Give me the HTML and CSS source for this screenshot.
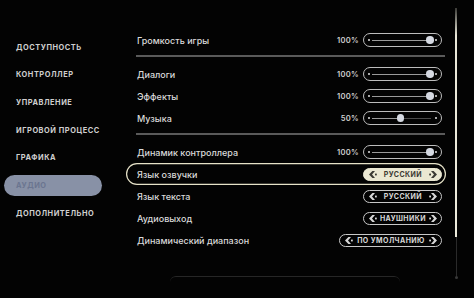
FILE: index.html
```html
<!DOCTYPE html>
<html lang="ru">
<head>
    <meta charset="UTF-8">
    <meta name="viewport" content="width=device-width, initial-scale=1.0">
    <title>Аудио</title>
    <link rel="stylesheet" href="styles.css">
</head>
<body>

<div class="screen">
    <nav class="sidebar">
        <div class="nav-item">Доступность</div>
        <div class="nav-item">Контроллер</div>
        <div class="nav-item">Управление</div>
        <div class="nav-item">Игровой процесс</div>
        <div class="nav-item">Графика</div>
        <div class="nav-item active">Аудио</div>
        <div class="nav-item">Дополнительно</div>
    </nav>

    <div class="settings">
        <div class="row">
            <span class="label">Громкость игры</span>
            <div class="control">
                <span class="value">100%</span>
                <div class="slider"><span class="dot"></span><div class="track"><span class="fill" style="width: 100%"></span><span class="knob" style="left: 100%"></span></div><span class="dot end"></span></div>
            </div>
        </div>
        <div class="divider"></div>
        <div class="row">
            <span class="label">Диалоги</span>
            <div class="control">
                <span class="value">100%</span>
                <div class="slider"><span class="dot"></span><div class="track"><span class="fill" style="width: 100%"></span><span class="knob" style="left: 100%"></span></div><span class="dot end"></span></div>
            </div>
        </div>
        <div class="row">
            <span class="label">Эффекты</span>
            <div class="control">
                <span class="value">100%</span>
                <div class="slider"><span class="dot"></span><div class="track"><span class="fill" style="width: 100%"></span><span class="knob" style="left: 100%"></span></div><span class="dot end"></span></div>
            </div>
        </div>
        <div class="row">
            <span class="label">Музыка</span>
            <div class="control">
                <span class="value">50%</span>
                <div class="slider"><span class="dot"></span><div class="track"><span class="fill" style="width: 50%"></span><span class="knob" style="left: 50%"></span></div><span class="dot end"></span></div>
            </div>
        </div>
        <div class="divider"></div>
        <div class="row">
            <span class="label">Динамик контроллера</span>
            <div class="control">
                <span class="value">100%</span>
                <div class="slider"><span class="dot"></span><div class="track"><span class="fill" style="width: 100%"></span><span class="knob" style="left: 100%"></span></div><span class="dot end"></span></div>
            </div>
        </div>
        <div class="row selected">
            <span class="label">Язык озвучки</span>
            <div class="control">
                <div class="picker">
                    <svg class="arrow" viewBox="0 0 8 7"><path d="M0 3.5 3.4 0H6L3 3.5 6 7H3.4Z"/><rect x="6" y="2.6" width="1.8" height="1.8"/></svg>
                    <span>Русский</span>
                    <svg class="arrow" viewBox="0 0 8 7"><path d="M8 3.5 4.6 0H2L5 3.5 2 7H4.6Z"/><rect x="0.2" y="2.6" width="1.8" height="1.8"/></svg>
                </div>
            </div>
        </div>
        <div class="row">
            <span class="label">Язык текста</span>
            <div class="control">
                <div class="picker">
                    <svg class="arrow" viewBox="0 0 8 7"><path d="M0 3.5 3.4 0H6L3 3.5 6 7H3.4Z"/><rect x="6" y="2.6" width="1.8" height="1.8"/></svg>
                    <span>Русский</span>
                    <svg class="arrow" viewBox="0 0 8 7"><path d="M8 3.5 4.6 0H2L5 3.5 2 7H4.6Z"/><rect x="0.2" y="2.6" width="1.8" height="1.8"/></svg>
                </div>
            </div>
        </div>
        <div class="row">
            <span class="label">Аудиовыход</span>
            <div class="control">
                <div class="picker">
                    <svg class="arrow" viewBox="0 0 8 7"><path d="M0 3.5 3.4 0H6L3 3.5 6 7H3.4Z"/><rect x="6" y="2.6" width="1.8" height="1.8"/></svg>
                    <span>Наушники</span>
                    <svg class="arrow" viewBox="0 0 8 7"><path d="M8 3.5 4.6 0H2L5 3.5 2 7H4.6Z"/><rect x="0.2" y="2.6" width="1.8" height="1.8"/></svg>
                </div>
            </div>
        </div>
        <div class="row">
            <span class="label">Динамический диапазон</span>
            <div class="control">
                <div class="picker wide">
                    <svg class="arrow" viewBox="0 0 8 7"><path d="M0 3.5 3.4 0H6L3 3.5 6 7H3.4Z"/><rect x="6" y="2.6" width="1.8" height="1.8"/></svg>
                    <span>По умолчанию</span>
                    <svg class="arrow" viewBox="0 0 8 7"><path d="M8 3.5 4.6 0H2L5 3.5 2 7H4.6Z"/><rect x="0.2" y="2.6" width="1.8" height="1.8"/></svg>
                </div>
            </div>
        </div>
        <div class="footer-panel"></div>
    </div>

    <div class="scrollbar">
        <div class="thumb"></div>
        <div class="rail"></div>
        <div class="rail-end"></div>
    </div>
</div>

</body>
</html>
```

FILE: styles.css
```css
body {
    margin: 0;
    background-color: #030303;
    font-family: Inter, "Noto Sans", sans-serif;
    color: #d8d8d8;
}
.screen {
    display: flex;
    width: 474px;
    height: 298px;
    overflow: hidden;
}
.sidebar {
    width: 126px;
    padding-top: 36.5px;
    display: flex;
    flex-direction: column;
    gap: 6.7px;
    flex-shrink: 0;
}
.nav-item {
    margin-left: 4px;
    width: 98px;
    height: 21px;
    padding-left: 12px;
    box-sizing: border-box;
    display: flex;
    align-items: center;
    font-size: 7.4px;
    font-weight: 700;
    letter-spacing: 0.55px;
    text-transform: uppercase;
    color: #cfcfcf;
    border-radius: 11px;
}
.nav-item.active {
    background-color: #8891a6;
    color: #6b7590;
}
.settings {
    width: 320px;
    padding-top: 29px;
    flex-shrink: 0;
}
.row {
    height: 22px;
    padding: 0 4px 0 11px;
    display: flex;
    align-items: center;
    justify-content: space-between;
    box-sizing: border-box;
    border-radius: 11px;
}
.row.selected {
    box-shadow: inset 0 0 0 1.2px #e6e2c8;
}
.label {
    font-size: 9px;
    font-weight: 500;
    color: #dadada;
}
.control {
    display: flex;
    align-items: center;
    gap: 4px;
}
.value {
    font-size: 7.6px;
    font-weight: 600;
    letter-spacing: 0.3px;
    color: #cfcfcf;
}
.divider {
    height: 1.5px;
    margin: 4px 1px 6.5px 10px;
    background-color: #5a5a5a;
}
.slider {
    width: 79px;
    height: 14px;
    box-sizing: border-box;
    border: 1px solid #bdbdbd;
    border-radius: 7px;
    display: flex;
    align-items: center;
    padding: 0 4px;
    gap: 2px;
}
.dot {
    width: 2px;
    height: 2px;
    border-radius: 1px;
    background-color: #e0e0e0;
    flex-shrink: 0;
}
.track {
    position: relative;
    flex: 1;
    height: 1px;
    margin-right: 2px;
    background-color: #4a4a4a;
}
.fill {
    position: absolute;
    left: 0;
    top: 0;
    height: 1px;
    background-color: #9a9a9a;
}
.knob {
    position: absolute;
    top: -3.5px;
    width: 7.5px;
    height: 7.5px;
    margin-left: -5px;
    border-radius: 50%;
    background-color: #d5d9e2;
}
.picker {
    width: 79px;
    height: 13px;
    box-sizing: border-box;
    border: 1px solid #c8c8c8;
    border-radius: 7px;
    padding: 0 4px 0 5px;
    display: flex;
    align-items: center;
    justify-content: space-between;
    font-size: 7px;
    font-weight: 700;
    letter-spacing: 0.45px;
    text-transform: uppercase;
    color: #d6d6d6;
    fill: #d6d6d6;
}
.picker.wide {
    width: 103px;
}
.row.selected .picker {
    background-color: #ebe8d2;
    border-color: #ebe8d2;
    color: #3b3a33;
    fill: #3b3a33;
}
.arrow {
    width: 8px;
    height: 7px;
    flex-shrink: 0;
}
.footer-panel {
    margin: 25px 0 0 44px;
    width: 230px;
    height: 10px;
    border-top: 1.5px solid #262626;
    border-radius: 6px 6px 0 0;
}
.scrollbar {
    margin-left: 9px;
    width: 2px;
    padding-top: 8px;
    display: flex;
    flex-direction: column;
    align-items: center;
}
.thumb {
    width: 2px;
    height: 229px;
    background: linear-gradient(to bottom, #3a3a36, #e9e7d8 12%, #eceadb);
}
.rail {
    width: 1px;
    height: 39px;
    background-color: #2a2a2a;
}
.rail-end {
    width: 3px;
    height: 3px;
    border-radius: 50%;
    background-color: #3a3a3a;
}
```
